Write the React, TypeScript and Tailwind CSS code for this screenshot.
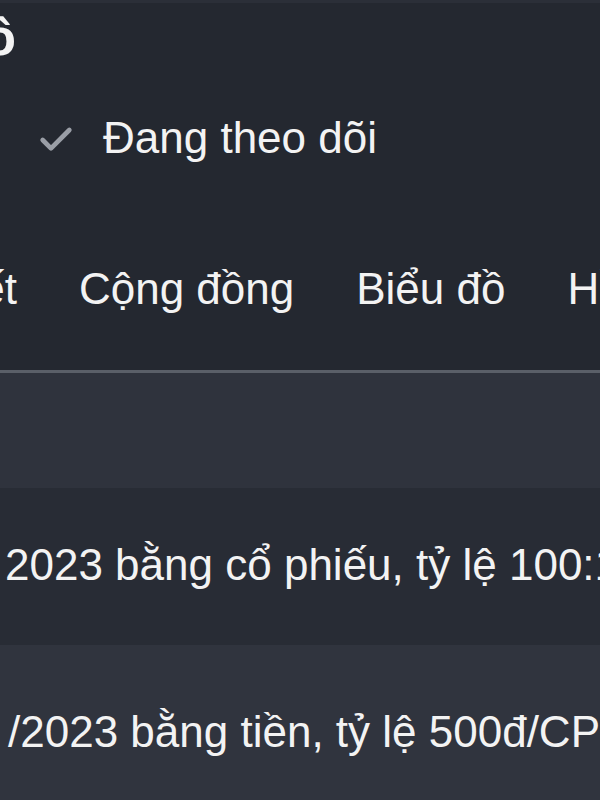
import { Check } from "lucide-react";

const TABS = ["Chi tiết", "Cộng đồng", "Biểu đồ", "Hồ sơ"];

const EVENTS = [
  { text: "2023 bằng cổ phiếu, tỷ lệ 100:1", indent: "pl-[5px]", pad: "pt-[55px] pb-[58px]", bg: "bg-[#282c35]" },
  { text: "/2023 bằng tiền, tỷ lệ 500đ/CP", indent: "pl-[8px]", pad: "pt-[65px] pb-[60px]", bg: "bg-[#30343e]" }
];

export default function App() {
  return (
    <div
      className="h-[800px] w-[600px] overflow-hidden bg-[#242830] text-[#f3f3f3]"
      style={{ fontFamily: '"Liberation Sans", Arial, sans-serif' }}
    >
      <div className="h-[3px] bg-[#2b2f38]" />

      {/* title, cut off on the left */}
      <div className="mt-[8px] -ml-[184px] flex h-[52px] w-[200px] justify-end">
        <h1 className="whitespace-nowrap text-[52px] font-bold leading-none">Hồ</h1>
      </div>

      <div className="mt-[53px] flex items-start">
        <Check size={40} strokeWidth={2.8} className="ml-[36px] mt-[4px] text-[#9a9ea6]" />
        <span className="ml-[27px] text-[44px] leading-none">Đang theo dõi</span>
      </div>

      <nav className="mt-[107px] -ml-[120px] flex gap-[62px] whitespace-nowrap pb-[59px] text-[44px] leading-none">
        {TABS.map((t) => (
          <span key={t}>{t}</span>
        ))}
      </nav>

      <div className="h-[3px] bg-[#5a5f68]" />
      <div className="h-[115px] bg-[#2f333d]" />

      {EVENTS.map((e) => (
        <div key={e.text} className={`${e.bg} ${e.pad}`}>
          <p className={`${e.indent} whitespace-nowrap text-[44px] leading-none`}>{e.text}</p>
        </div>
      ))}
    </div>
  );
}
